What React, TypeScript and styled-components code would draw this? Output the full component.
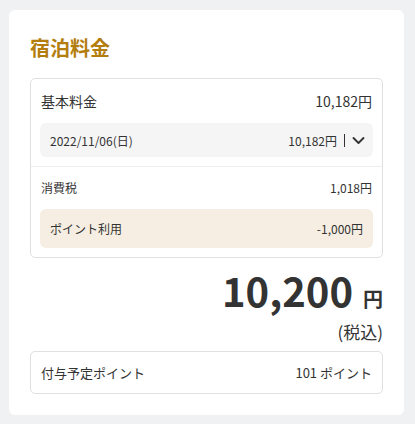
import React from "react";
import styled, { createGlobalStyle } from "styled-components";

const Global = createGlobalStyle`
  html, body { margin: 0; padding: 0; background: #f0f1f3; }
  body { font-family: "Noto Sans CJK JP", "Noto Sans", sans-serif; color: #333; }
  * { box-sizing: border-box; }
`;

const Page = styled.div`
  padding: 10px 11px 10px 9px;
  width: 415px;
`;

const Card = styled.section`
  background: #fff;
  border-radius: 6px;
  padding: 21px 21px 21px 21px;
  display: flex;
  flex-direction: column;
`;

const Title = styled.h2`
  margin: 0;
  font-size: 20px;
  line-height: 34px;
  font-weight: 700;
  color: #b37e0e;
`;

const Box = styled.div<{ $mt?: number }>`
  margin-top: ${(p) => p.$mt ?? 0}px;
  border: 1px solid #e0e0e2;
  border-radius: 5px;
  background: #fff;
`;

const Section = styled.div<{ $divider?: boolean }>`
  padding: 10px 9px 9px 9px;
  display: flex;
  flex-direction: column;
  gap: 11px;
  border-top: ${(p) => (p.$divider ? "1px solid #eeeeee" : "none")};
`;

const Row = styled.div<{ $size: number; $h: number }>`
  display: flex;
  justify-content: space-between;
  align-items: center;
  padding: 0 1px 0 1px;
  font-size: ${(p) => p.$size}px;
  height: ${(p) => p.$h}px;
`;

const SubRow = styled.div<{ $bg: string }>`
  display: flex;
  justify-content: space-between;
  align-items: center;
  background: ${(p) => p.$bg};
  border-radius: 6px;
  font-size: 12px;
  padding: 0 10px;
`;

const DateRow = styled(SubRow)`
  height: 34px;
  padding-right: 7px;
`;

const PointRow = styled(SubRow)`
  height: 39px;
`;

const Right = styled.div`
  display: flex;
  align-items: center;
`;

const Sep = styled.span`
  display: inline-block;
  width: 1px;
  height: 13px;
  background: #333;
  margin: 0 6px 0 7px;
`;

const Chevron = styled.svg`
  width: 15px;
  height: 15px;
  display: block;
`;

const Total = styled.div`
  display: flex;
  flex-direction: column;
  align-items: flex-end;
  margin-top: 12px;
`;

const Amount = styled.div`
  display: flex;
  align-items: baseline;
  line-height: 1;
`;

const Big = styled.span`
  font-size: 40px;
  font-weight: 700;
`;

const Yen = styled.span`
  font-size: 20px;
  font-weight: 700;
  margin-left: 10px;
`;

const Tax = styled.div`
  font-size: 17px;
  line-height: 26px;
  margin-top: 9px;
`;

const PointsBox = styled(Box)`
  height: 43px;
  display: flex;
  align-items: center;
  justify-content: space-between;
  padding: 0 10px;
  font-size: 13px;
`;

export default function App() {
  return (
    <>
      <Global />
      <Page>
        <Card>
          <Title>宿泊料金</Title>
          <Box $mt={13}>
            <Section>
              <Row $size={14} $h={23}>
                <span>基本料金</span>
                <span>10,182円</span>
              </Row>
              <DateRow $bg="#f5f5f5">
                <span>2022/11/06(日)</span>
                <Right>
                  <span>10,182円</span>
                  <Sep />
                  <Chevron viewBox="0 0 24 24" fill="none" stroke="#333" strokeWidth={3} strokeLinecap="round" strokeLinejoin="round">
                    <path d="M4 8l8 8 8-8" />
                  </Chevron>
                </Right>
              </DateRow>
            </Section>
            <Section $divider>
              <Row $size={12} $h={21}>
                <span>消費税</span>
                <span>1,018円</span>
              </Row>
              <PointRow $bg="#f6eee2">
                <span>ポイント利用</span>
                <span>-1,000円</span>
              </PointRow>
            </Section>
          </Box>
          <Total>
            <Amount>
              <Big>10,200</Big>
              <Yen>円</Yen>
            </Amount>
            <Tax>(税込)</Tax>
          </Total>
          <PointsBox $mt={6}>
            <span>付与予定ポイント</span>
            <span>101 ポイント</span>
          </PointsBox>
        </Card>
      </Page>
    </>
  );
}
